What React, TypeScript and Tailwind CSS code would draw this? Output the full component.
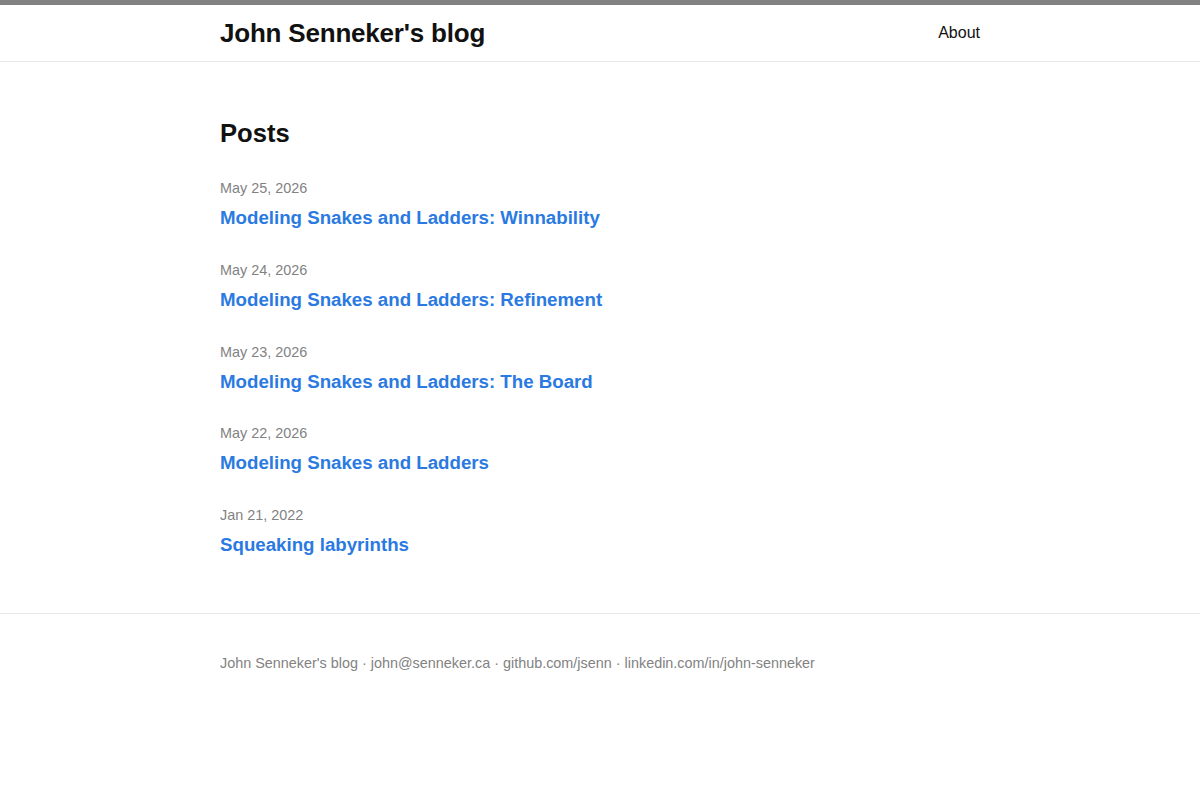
const posts = [
  { date: 'May 25, 2026', title: 'Modeling Snakes and Ladders: Winnability' },
  { date: 'May 24, 2026', title: 'Modeling Snakes and Ladders: Refinement' },
  { date: 'May 23, 2026', title: 'Modeling Snakes and Ladders: The Board' },
  { date: 'May 22, 2026', title: 'Modeling Snakes and Ladders' },
  { date: 'Jan 21, 2022', title: 'Squeaking labyrinths' },
]

export default function App() {
  return (
    <div className="min-h-[800px] bg-white font-['Liberation_Sans',Arial,sans-serif] text-[#111]">
      <header className="border-t-[5px] border-t-[#828282] border-b border-b-[#e8e8e8]">
        <div className="mx-auto flex h-[56px] w-[760px] items-center justify-between">
          <a className="text-[26px] font-bold leading-none tracking-[-0.2px] text-[#111]">John Senneker's blog</a>
          <nav>
            <a className="text-[16px] text-[#111]">About</a>
          </nav>
        </div>
      </header>

      <main className="mx-auto w-[760px] pt-[56px] pb-[55px]">
        <h1 className="text-[25.6px] font-bold leading-[30px] text-[#111]">Posts</h1>
        <ul className="mt-[30px] flex flex-col gap-[28.75px]">
          {posts.map((p) => (
            <li key={p.title}>
              <div className="text-[14.4px] leading-[20px] text-[#828282]">{p.date}</div>
              <a className="mt-[7px] block text-[18.7px] font-bold leading-[26px] text-[#2a7ae2]">{p.title}</a>
            </li>
          ))}
        </ul>
      </main>

      <footer className="border-t border-t-[#e8e8e8]">
        <div className="mx-auto w-[760px] pt-[39px] text-[14.4px] leading-[20px] text-[#828282]">
          John Senneker's blog · john@senneker.ca · github.com/jsenn · linkedin.com/in/john-senneker
        </div>
      </footer>
    </div>
  )
}
